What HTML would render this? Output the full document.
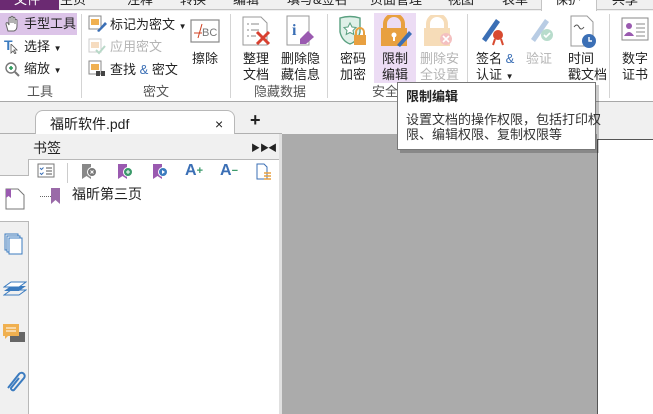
<!DOCTYPE html>
<html><head><meta charset="utf-8"><style>
*{margin:0;padding:0;box-sizing:border-box}
body{width:653px;height:414px;overflow:hidden;background:#f0f0f0;font-family:"Liberation Sans","Noto Sans CJK SC",sans-serif;font-size:13px;color:#222;position:relative}
.a{position:absolute;white-space:nowrap;line-height:16px}
.sep{position:absolute;top:14px;width:1px;height:84px;background:#d4d4d4}
.g{color:#b4b4b4}
.grp{position:absolute;top:84px;color:#555;line-height:16px}
</style></head><body>
<div class="a" style="left:0;top:0;width:653px;height:10px;border-bottom:1px solid #c4c4c4"></div>
<div class="a" style="left:0;top:0;width:59px;height:10px;background:#6b2a72"></div>
<div class="a" style="left:541px;top:-2px;width:56px;height:13px;background:#fff;border:1px solid #c4c4c4;border-bottom:none"></div>
<div class="a" style="left:0;top:-8px;width:653px;height:16px">
<span style="position:absolute;left:14px;color:#fff">文件</span>
<span style="position:absolute;left:60px">主页</span>
<span style="position:absolute;left:127px">注释</span>
<span style="position:absolute;left:180px">转换</span>
<span style="position:absolute;left:233px">编辑</span>
<span style="position:absolute;left:287px">填写&amp;签名</span>
<span style="position:absolute;left:370px">页面管理</span>
<span style="position:absolute;left:448px">视图</span>
<span style="position:absolute;left:502px">表单</span>
<span style="position:absolute;left:555px">保护</span>
<span style="position:absolute;left:612px">共享</span>
</div>

<!-- ribbon -->
<div class="a" style="left:0;top:11px;width:653px;height:91px;background:#fff;border-bottom:1px solid #a8a8a8"></div>
<div class="sep" style="left:81px"></div>
<div class="sep" style="left:230px"></div>
<div class="sep" style="left:327px"></div>
<div class="sep" style="left:467px"></div>
<div class="sep" style="left:609px"></div>

<!-- tools -->
<div class="a" style="left:0;top:13px;width:77px;height:22px;background:#dcc4e8"></div>
<svg class="a" style="left:4px;top:15px" width="16" height="18" viewBox="0 0 16 18"><path d="M4 16 L2 9 Q2 7 4 8 L5 10 L5 3 Q6 1.5 7 3 L7 8 L7 2 Q8 .5 9 2 L9 8 L9 3 Q10 1.5 11 3 L11 9 L11 5 Q12 4 13 5 L13 11 Q13 15 10 16 Z" fill="#fff" stroke="#666"/></svg>
<div class="a" style="left:24px;top:16px">手型工具</div>
<div class="a" style="left:4px;top:37px;color:#3b7bbf;font-weight:bold;font-size:14px">T</div>
<svg class="a" style="left:10px;top:44px" width="8" height="10"><path d="M1 0 L1 9 L3 7 L5 10 L6 9 L4 6 L7 6Z" fill="#fff" stroke="#555" stroke-width=".8"/></svg>
<div class="a" style="left:24px;top:39px">选择 <span style="font-size:8px">▼</span></div>
<svg class="a" style="left:4px;top:61px" width="16" height="16"><circle cx="7" cy="7" r="5" fill="#fff" stroke="#777" stroke-width="1.4"/><path d="M5 7h4M7 5v4" stroke="#2a9a5a" stroke-width="1.6"/><path d="M11 11l4 4" stroke="#777" stroke-width="2"/></svg>
<div class="a" style="left:24px;top:61px">缩放 <span style="font-size:8px">▼</span></div>
<div class="grp" style="left:27px">工具</div>

<!-- redaction -->
<svg class="a" style="left:88px;top:15px" width="20" height="18"><rect x="1" y="1" width="12" height="13" fill="#fff" stroke="#888"/><rect x="3" y="4" width="8" height="6" fill="#f0b050"/><path d="M9 16 L17 7 L19 9 L11 17Z" fill="#3b6fb5"/></svg>
<div class="a" style="left:110px;top:17px">标记为密文 <span style="font-size:8px">▼</span></div>
<svg class="a" style="left:88px;top:38px" width="20" height="18"><rect x="1" y="1" width="12" height="13" fill="#fff" stroke="#ccc"/><rect x="3" y="4" width="8" height="6" fill="#f6dcc0"/><path d="M8 12 L11 15 L17 8" stroke="#b8d8c8" stroke-width="2" fill="none"/></svg>
<div class="a g" style="left:110px;top:39px">应用密文</div>
<svg class="a" style="left:88px;top:60px" width="20" height="18"><rect x="1" y="1" width="12" height="13" fill="#fff" stroke="#888"/><rect x="3" y="4" width="8" height="6" fill="#f0b050"/><rect x="8" y="11" width="4" height="5" fill="#444"/><rect x="13" y="11" width="4" height="5" fill="#444"/></svg>
<div class="a" style="left:110px;top:62px">查找 <span style="color:#3b6fb5">&amp;</span> 密文</div>
<svg class="a" style="left:190px;top:19px" width="30" height="25"><rect x="1" y="1" width="28" height="22" fill="#fff" stroke="#888" stroke-width="1.2"/><path d="M4 14h8M12 5 L8 19" stroke="#d04020" stroke-width="1"/><text x="12" y="17" font-size="11" fill="#777" font-family="Liberation Sans">BC</text></svg>
<div class="a" style="left:192px;top:51px">擦除</div>
<div class="grp" style="left:143px">密文</div>

<!-- hidden data -->
<svg class="a" style="left:241px;top:15px" width="32" height="32"><path d="M2 2h18l6 6v22H2z" fill="#fff" stroke="#999"/><path d="M6 9h2M10 9h8M6 15h2M10 15h8M6 21h2M10 21h5" stroke="#888"/><path d="M16 17 L28 29 M28 17 L16 29" stroke="#d84030" stroke-width="3"/></svg>
<div class="a" style="left:243px;top:51px">整理<br>文档</div>
<svg class="a" style="left:286px;top:15px" width="30" height="32"><rect x="1" y="1" width="22" height="29" fill="#fff" stroke="#999"/><text x="6" y="20" font-size="16" font-weight="bold" fill="#3b6fb5" font-family="Liberation Serif">i</text><path d="M14 24 L22 16 L28 22 L20 29 L14 29Z" fill="#9a5ab0"/></svg>
<div class="a" style="left:281px;top:51px">删除隐<br>藏信息</div>
<div class="grp" style="left:254px">隐藏数据</div>

<!-- security -->
<svg class="a" style="left:338px;top:15px" width="30" height="32"><path d="M2 3 Q12 0 22 3 L22 17 Q20 26 12 29 Q4 26 2 17Z" fill="#dff0e8" stroke="#5aa080" stroke-width="1.4"/><path d="M12 8 l2 4 4 .5 -3 3 .8 4 -3.8 -2 -3.8 2 .8 -4 -3 -3 4 -.5z" fill="#fff" stroke="#5aa080"/><path d="M18 20 v-3 a4 4 0 0 1 8 0 v3" stroke="#e8a040" stroke-width="2" fill="none"/><rect x="16" y="20" width="12" height="10" fill="#e8a040"/></svg>
<div class="a" style="left:340px;top:51px">密码<br>加密</div>
<div class="a" style="left:374px;top:13px;width:42px;height:70px;background:#ecdcf4"></div>
<svg class="a" style="left:379px;top:15px" width="34" height="32"><path d="M6 14 v-5 a9 9 0 0 1 18 0 v5" stroke="#e8a040" stroke-width="4" fill="none"/><rect x="2" y="13" width="26" height="18" fill="#e8a040"/><circle cx="15" cy="20" r="2.5" fill="#fff"/><path d="M14 21h2v5h-2z" fill="#fff"/><path d="M18 30 L30 16 L33 19 L21 32Z" fill="#3b6fb5"/></svg>
<div class="a" style="left:382px;top:51px">限制<br>编辑</div>
<svg class="a" style="left:422px;top:15px" width="34" height="32"><path d="M6 14 v-5 a9 9 0 0 1 18 0 v5" stroke="#f6dcb8" stroke-width="4" fill="none"/><rect x="2" y="13" width="26" height="18" fill="#f6dcb8"/><circle cx="24" cy="24" r="6" fill="#f4c0c0"/><path d="M21 21l6 6M27 21l-6 6" stroke="#fff" stroke-width="1.6"/></svg>
<div class="a g" style="left:420px;top:51px">删除安<br>全设置</div>
<div class="grp" style="left:372px">安全</div>

<!-- sign -->
<svg class="a" style="left:478px;top:15px" width="30" height="32"><path d="M4 24 L18 4 L22 7 L8 27Z" fill="#3b6fb5"/><circle cx="20" cy="20" r="5" fill="#d84a30"/><path d="M17 24 L15 30 M23 24 L25 30" stroke="#d84a30" stroke-width="2"/></svg>
<div class="a" style="left:476px;top:51px">签名 <span style="color:#3b6fb5">&amp;</span><br>认证 <span style="font-size:8px">▼</span></div>
<svg class="a" style="left:527px;top:15px" width="30" height="32"><path d="M4 24 L18 4 L22 7 L8 27Z" fill="#b8cce4"/><circle cx="20" cy="20" r="6" fill="#b8dccc"/><path d="M17 20l2 2 4-4" stroke="#fff" stroke-width="1.6" fill="none"/></svg>
<div class="a g" style="left:526px;top:51px">验证</div>
<svg class="a" style="left:569px;top:15px" width="30" height="34"><path d="M2 1h16l6 6v24H2z" fill="#fff" stroke="#999"/><path d="M5 12 q3 -4 5 0 t5 0" stroke="#555" fill="none"/><circle cx="20" cy="26" r="7" fill="#3b6fb5"/><path d="M20 22v4h3" stroke="#fff" stroke-width="1.4" fill="none"/></svg>
<div class="a" style="left:568px;top:51px">时间<br>戳文档</div>
<svg class="a" style="left:621px;top:17px" width="30" height="28"><rect x="1" y="1" width="26" height="22" fill="#fff" stroke="#888"/><circle cx="8" cy="9" r="3" fill="#9a5ab0"/><path d="M3 19 q5 -8 10 0z" fill="#9a5ab0"/><path d="M15 7h9M15 11h9M15 15h9M15 19h9" stroke="#888"/></svg>
<div class="a" style="left:622px;top:51px">数字<br>证书</div>

<!-- doc tab bar -->
<div class="a" style="left:0;top:133px;width:282px;height:1px;background:#b0b0b0"></div>
<div class="a" style="left:35px;top:110px;width:200px;height:24px;background:#fff;border:1px solid #b8b8b8;border-bottom:none;border-radius:8px 8px 0 0"></div>
<div class="a" style="left:50px;top:116px;font-size:14px">福昕软件.pdf</div>
<div class="a" style="left:215px;top:116px;font-size:14px">×</div>
<div class="a" style="left:250px;top:112px;font-size:18px;font-weight:bold">+</div>

<!-- left panel -->
<div class="a" style="left:33px;top:140px;font-size:14px">书签</div>
<div class="a" style="left:251px;top:140px;font-size:9px">▶▶</div>
<div class="a" style="left:268px;top:140px;font-size:9px">◀</div>
<div class="a" style="left:28px;top:159px;width:251px;height:255px;background:#fff;border-top:1px solid #b8b8b8;border-left:1px solid #b8b8b8"></div>
<div class="a" style="left:0;top:175px;width:29px;height:1px;background:#b8b8b8"></div>
<div class="a" style="left:0;top:176px;width:29px;height:45px;background:#fff"></div>
<div class="a" style="left:0;top:221px;width:29px;height:1px;background:#b8b8b8"></div>
<div class="a" style="left:279px;top:134px;width:3px;height:280px;background:#e0e0e0"></div>
<div class="a" style="left:282px;top:134px;width:315px;height:280px;background:#ababab"></div>
<div class="a" style="left:597px;top:139px;width:56px;height:275px;background:#fff;border-left:1px solid #555;border-top:1px solid #555"></div>

<!-- panel toolbar -->
<svg class="a" style="left:37px;top:163px" width="20" height="16"><rect x="1" y="1" width="16" height="13" fill="#fff" stroke="#777"/><path d="M3 5l1.5 1.5 2-2M3 10l1.5 1.5 2-2" stroke="#3b6fb5" fill="none"/><path d="M9 5h6M9 8h6M9 11h6" stroke="#555"/></svg>
<div class="a" style="left:67px;top:163px;width:1px;height:20px;background:#ccc"></div>
<svg class="a" style="left:81px;top:163px" width="16" height="18"><path d="M1 1h9v15l-4.5-3 -4.5 3z" fill="#888"/><circle cx="11" cy="9" r="4.5" fill="#777" stroke="#fff"/><path d="M9.5 7.5l3 3M12.5 7.5l-3 3" stroke="#fff"/></svg>
<svg class="a" style="left:117px;top:163px" width="16" height="18"><path d="M1 1h9v15l-4.5-3 -4.5 3z" fill="#9a5ab0"/><circle cx="11" cy="9" r="4.5" fill="#3a9a6a" stroke="#fff"/><path d="M9 9h4M11 7v4" stroke="#fff"/></svg>
<svg class="a" style="left:152px;top:163px" width="16" height="18"><path d="M1 1h9v15l-4.5-3 -4.5 3z" fill="#9a5ab0"/><circle cx="11" cy="9" r="4.5" fill="#3b7bbf" stroke="#fff"/><path d="M10 7l3 2 -3 2z" fill="#fff"/></svg>
<div class="a" style="left:185px;top:163px;font-size:16px;font-weight:bold;color:#3b6fb5">A<span style="font-size:11px;color:#3a9a6a;vertical-align:top">+</span></div>
<div class="a" style="left:220px;top:163px;font-size:16px;font-weight:bold;color:#3b6fb5">A<span style="font-size:11px;color:#3a9a6a;vertical-align:top">−</span></div>
<svg class="a" style="left:256px;top:163px" width="16" height="18"><path d="M1 1h7l3 3v12H1z" fill="#fff" stroke="#3b6fb5"/><path d="M8 10h7M8 13h7M8 16h7" stroke="#e8a040" stroke-width="1.6"/></svg>

<!-- bookmark item -->
<div class="a" style="left:40px;top:196px;width:11px;border-top:1px dotted #666"></div>
<svg class="a" style="left:51px;top:188px" width="9" height="16"><path d="M0 0h9v16l-4.5-4 -4.5 4z" fill="#9a6aa8"/></svg>
<div class="a" style="left:72px;top:186px;font-size:14px">福昕第三页</div>

<!-- sidebar icons -->
<svg class="a" style="left:5px;top:188px" width="20" height="22"><path d="M1 1h12l6 6v14H1z" fill="#fff" stroke="#777"/><path d="M1 1h5v9l-2.5-2 -2.5 2z" fill="#9a5ab0"/></svg>
<svg class="a" style="left:4px;top:233px" width="20" height="22"><rect x="1" y="1" width="13" height="16" fill="none" stroke="#3b7bbf"/><rect x="3" y="3" width="13" height="16" fill="#fff" stroke="#3b7bbf"/><rect x="5" y="5" width="13" height="16" fill="#fff" stroke="#3b7bbf"/></svg>
<svg class="a" style="left:3px;top:279px" width="24" height="20"><path d="M1 12 L8 7 L23 7 L16 12Z" fill="#3b7bbf"/><path d="M1 8 L8 3 L23 3 L16 8Z" fill="#fff" stroke="#3b7bbf"/><path d="M1 16 L8 11 L23 11 L16 16Z" fill="none" stroke="#3b7bbf"/></svg>
<svg class="a" style="left:3px;top:323px" width="24" height="24"><rect x="7" y="9" width="15" height="10" fill="#666"/><rect x="0" y="1" width="16" height="12" fill="#f0b050"/><path d="M2 16 l3-3 h-3z" fill="#f0b050"/><path d="M3 5h10M3 8h10" stroke="#fff"/></svg>
<svg class="a" style="left:4px;top:368px" width="22" height="24"><path d="M4 20 L15 6 a3 3 0 0 1 5 4 L10 22 a2 2 0 0 1-3-2 L15 10" stroke="#3b7bbf" stroke-width="2" fill="none"/></svg>

<!-- tooltip -->
<div class="a" style="left:400px;top:85px;width:199px;height:68px;background:rgba(0,0,0,.2)"></div>
<div class="a" style="left:397px;top:82px;width:199px;height:68px;background:#fff;border:1px solid #777"></div>
<div class="a" style="left:406px;top:89px;font-weight:bold">限制编辑</div>
<div class="a" style="left:406px;top:112px;line-height:15px;color:#333">设置文档的操作权限，包括打印权<br>限、编辑权限、复制权限等</div>
</body></html>
